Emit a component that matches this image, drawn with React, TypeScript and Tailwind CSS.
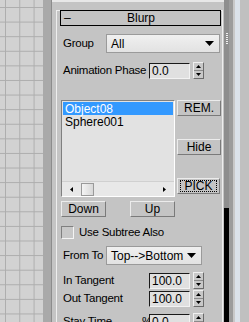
import React from "react";

const font = { fontFamily: '"Liberation Sans", Arial, sans-serif' };

function Spinner() {
  return (
    <div className="flex h-[17px] w-[11px] shrink-0 flex-col border border-t-[#f0f0f0] border-l-[#f0f0f0] border-r-[#6a6a6a] border-b-[#6a6a6a] bg-[#c8c8c8]">
      <div className="flex flex-1 items-center justify-center border-b border-[#8a8a8a]">
        <svg width="5" height="3" viewBox="0 0 5 3">
          <path d="M0 3 L2.5 0 L5 3 Z" fill="#000" />
        </svg>
      </div>
      <div className="flex flex-1 items-center justify-center">
        <svg width="5" height="3" viewBox="0 0 5 3">
          <path d="M0 0 L2.5 3 L5 0 Z" fill="#000" />
        </svg>
      </div>
    </div>
  );
}

function NumField({ value }: { value: string }) {
  return (
    <div className="flex shrink-0 items-center gap-[3px]">
      <div className="flex h-[16px] w-[41px] items-center border border-t-[#1a1a1a] border-l-[#1a1a1a] border-r-[#f2f2f2] border-b-[#f2f2f2] bg-[#e0e0e0] pl-[2px] text-[12px] leading-none">
        {value}
      </div>
      <Spinner />
    </div>
  );
}

function Dropdown({ value, width }: { value: string; width: string }) {
  return (
    <div
      className={`${width} flex h-[19px] shrink-0 items-center justify-between border border-[#9a9a9a] bg-[linear-gradient(180deg,#f0f0f0_0%,#e2e2e2_100%)] pl-[4px] pr-[5px] text-[12px] leading-none`}
    >
      <span>{value}</span>
      <svg width="9" height="5" viewBox="0 0 9 5">
        <path d="M0 0 L9 0 L4.5 5 Z" fill="#000" />
      </svg>
    </div>
  );
}

function Btn({ label, dotted, width }: { label: string; dotted?: boolean; width: string }) {
  return (
    <div
      className={`${width} flex h-[16px] items-center justify-center border border-t-[#ececec] border-l-[#ececec] border-r-[#7a7a7a] border-b-[#7a7a7a] bg-[#c4c4c4] text-[12px] leading-none`}
    >
      {dotted ? (
        <span className="mx-[2px] flex h-[12px] flex-1 items-center justify-center border border-dotted border-black">{label}</span>
      ) : (
        label
      )}
    </div>
  );
}

const label = "shrink-0 text-[11.5px] leading-none tracking-[-0.25px]";

export default function App() {
  return (
    <div className="flex h-[322px] w-[249px] overflow-hidden whitespace-nowrap bg-[#c4c4c4] text-black" style={font}>
      {/* viewport */}
      <div className="h-full w-[43px] bg-[#d2d2d2] bg-[linear-gradient(to_right,#adadad_1px,transparent_1px),linear-gradient(to_bottom,#adadad_1px,transparent_1px)] bg-[size:14.3px_14.6px] bg-[position:5px_7px]" />
      <div className="h-full w-[9px] border-r border-[#8c8c8c] bg-[#a9a9a9]" />

      {/* command panel */}
      <div className="flex h-full w-[172px] flex-col border-t-2 border-[#e8e8e8]">
        <div className="mt-[8px] mr-[1px] ml-[4px] h-full border-l border-t border-r border-l-[#eeeeee] border-t-[#eeeeee] border-r-[#eeeeee]">
          <div className="-mt-[1px] ml-[3px] mr-[1px] flex h-[16px] items-center border border-black bg-[#c4c4c4] text-[12px] leading-none">
            <span className="ml-[3px] w-[10px]">–</span>
            <span className="flex-1 pr-[12px] text-center">Blurp</span>
          </div>

          <div className="ml-[6px] mt-[8px] flex h-[19px] items-center">
            <span className={`w-[43px] ${label}`}>Group</span>
            <Dropdown value="All" width="w-[114px]" />
          </div>

          <div className="ml-[6px] mt-[9px] flex h-[17px] items-center">
            <span className={`w-[86px] ${label}`}>Animation Phase</span>
            <NumField value="0.0" />
          </div>

          <div className="ml-[4px] mt-[21px] flex">
            <div className="flex h-[97px] w-[114px] flex-col border border-t-[#808080] border-l-[#808080] border-r-[#ffffff] border-b-[#ffffff] bg-[#e2e2e2] text-[12px] leading-none">
              <div className="mx-[1px] mt-[1px] flex h-[13px] items-center bg-[#3399ff] pl-[2px] text-white">Object08</div>
              <div className="flex h-[14px] items-center pl-[3px]">Sphere001</div>
              <div className="flex-1" />
              <div className="flex h-[15px] items-center border-t border-[#d0d0d0] bg-[#e8e8e8]">
                <svg className="ml-[8px]" width="3" height="5" viewBox="0 0 3 5">
                  <path d="M3 0 L0 2.5 L3 5 Z" fill="#000" />
                </svg>
                <div className="ml-[8px] h-[13px] w-[13px] border border-[#9a9a9a] bg-[linear-gradient(90deg,#f4f4f4,#d8d8d8)]" />
                <div className="flex-1" />
                <svg className="mr-[8px]" width="3" height="5" viewBox="0 0 3 5">
                  <path d="M0 0 L3 2.5 L0 5 Z" fill="#000" />
                </svg>
              </div>
            </div>
            <div className="ml-[2px] flex flex-col">
              <Btn label="REM." width="w-[44px]" />
              <div className="mt-[23px]" />
              <Btn label="Hide" width="w-[44px]" />
              <div className="mt-[23px]" />
              <Btn label="PICK" width="w-[43px]" dotted />
            </div>
          </div>

          <div className="ml-[4px] mt-[4px] flex h-[16px]">
            <Btn label="Down" width="w-[45px]" />
            <div className="ml-[24px]">
              <Btn label="Up" width="w-[45px]" />
            </div>
          </div>

          <div className="ml-[4px] mt-[9px] flex h-[13px] items-center">
            <div className="h-[13px] w-[13px] border border-t-[#808080] border-l-[#808080] border-r-[#f4f4f4] border-b-[#f4f4f4] bg-[#c8c8c8]" />
            <span className={`ml-[5px] ${label}`}>Use Subtree Also</span>
          </div>

          <div className="ml-[6px] mt-[7px] flex h-[19px] items-center">
            <span className={`w-[43px] ${label}`}>From To</span>
            <Dropdown value="Top-->Bottom" width="w-[96px]" />
          </div>

          <div className="ml-[6px] mt-[7px] flex h-[17px] items-center">
            <span className={`w-[86px] ${label}`}>In Tangent</span>
            <NumField value="100.0" />
          </div>

          <div className="ml-[6px] mt-[1px] flex h-[17px] items-center">
            <span className={`w-[86px] ${label}`}>Out Tangent</span>
            <NumField value="100.0" />
          </div>

          <div className="ml-[6px] mt-[6px] flex h-[17px] items-center">
            <span className={`w-[79px] ${label}`}>Stay Time</span>
            <span className={`w-[7px] ${label}`}>%</span>
            <NumField value="0.0" />
          </div>
        </div>
      </div>

      {/* panel scroll strip */}
      <div className="flex h-full w-[5px] flex-col bg-[#8e8e8e]">
        <div className="ml-[2px] mt-[33px] h-[12px] w-[2px] bg-[repeating-linear-gradient(180deg,#f0f0f0_0px,#f0f0f0_1px,transparent_1px,transparent_2px)]" />
        <div className="flex-1" />
        <div className="h-[114px] bg-black" />
      </div>
      <div className="h-full w-[4px] bg-[#9c9c9c]" />
      <div className="h-full w-[2px] bg-[#c8c8c8]" />
      <div className="h-full w-[5px] bg-[#dbe2ea]" />
      <div className="h-full flex-1 bg-[#c0c0c0]" />
    </div>
  );
}
